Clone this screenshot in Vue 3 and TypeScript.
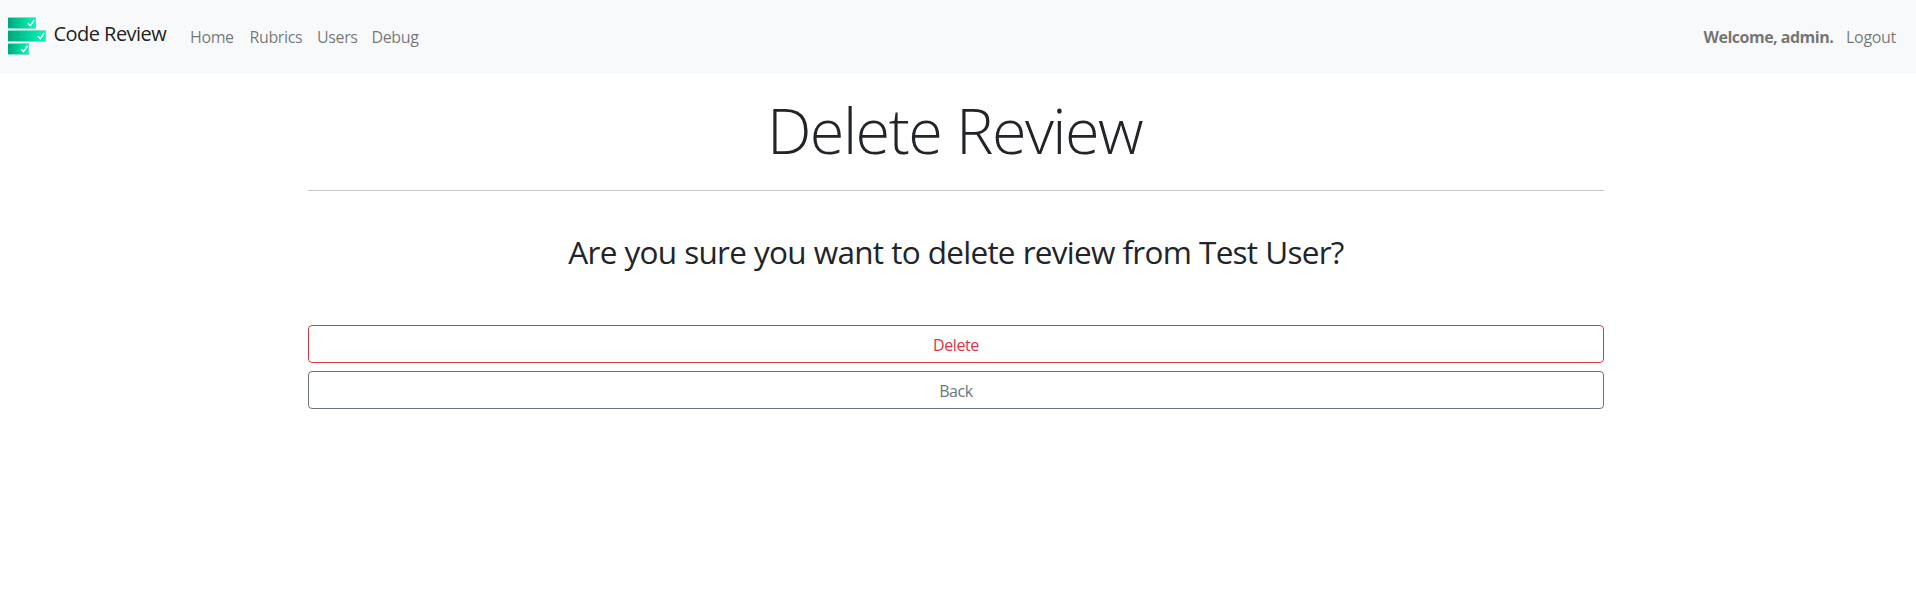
<script setup lang="ts">
const links: { label: string; key: string }[] = [
  { label: 'Home', key: 'home' },
  { label: 'Rubrics', key: 'rubrics' },
  { label: 'Users', key: 'users' },
  { label: 'Debug', key: 'debug' },
]
</script>

<template>
  <div class="page">
    <nav class="navbar">
      <a class="brand">
        <svg class="logo" width="38" height="38" viewBox="0 0 38 38">
          <defs>
            <linearGradient id="bar" x1="0" x2="1" y1="0" y2="0">
              <stop offset="0" stop-color="#00a67c" />
              <stop offset="1" stop-color="#00fab8" />
            </linearGradient>
          </defs>
          <rect x="0" y="0" width="28" height="12" fill="#82dfc5" />
          <rect x="0" y="13" width="38" height="12" fill="#82dfc5" />
          <rect x="0" y="26" width="21" height="12" fill="#82dfc5" />
          <rect x="0" y="1" width="27.5" height="10" fill="url(#bar)" />
          <rect x="0" y="14" width="37.5" height="10" fill="url(#bar)" />
          <rect x="0" y="27" width="20.5" height="10" fill="url(#bar)" />
          <g fill="none" stroke="#fff" stroke-width="1.5">
            <path d="M19.8 6.2 L22.3 8.6 L26.2 3" />
            <path d="M29.8 19.2 L32.3 21.6 L36.2 16" />
            <path d="M13 32.2 L15.5 34.6 L19.4 29" />
          </g>
        </svg>
        <span class="brand-name">Code Review</span>
      </a>
      <div class="links">
        <a v-for="link in links" :key="link.key" class="link" :class="link.key">{{ link.label }}</a>
      </div>
      <div class="account">
        <strong class="welcome">Welcome, admin.</strong>
        <a class="logout">Logout</a>
      </div>
    </nav>
    <main class="container">
      <h1 class="title">Delete Review</h1>
      <hr class="rule" />
      <h2 class="question">Are you sure you want to delete review from Test User?</h2>
      <div class="actions">
        <button class="btn danger" type="button">Delete</button>
        <button class="btn secondary" type="button">Back</button>
      </div>
    </main>
  </div>
</template>

<style>
body {
  background: #fff;
}
</style>

<style scoped>
.page {
  font-family: "Open Sans", "Noto Sans", sans-serif;
  font-size: 16px;
  line-height: 24px;
  color: #212529;
}
.navbar {
  box-sizing: border-box;
  height: 73px;
  padding: 0 20px 0 8px;
  display: flex;
  align-items: flex-start;
  background: #f8f9fa;
  white-space: nowrap;
}
.brand {
  display: flex;
  width: 182px;
  padding-top: 17px;
  color: rgba(0, 0, 0, 0.9);
}
.logo {
  flex: none;
}
.brand-name {
  margin: 2px 0 0 7.5px;
  font-size: 20px;
  line-height: 30px;
  letter-spacing: -0.54px;
}
.links,
.account {
  display: flex;
  padding-top: 25px;
  color: rgba(0, 0, 0, 0.55);
}
.link {
  letter-spacing: -0.38px;
}
.home {
  width: 59.5px;
}
.rubrics {
  width: 67.5px;
}
.users {
  width: 54.5px;
}
.account {
  margin-left: auto;
}
.welcome {
  width: 142.5px;
  letter-spacing: -0.5px;
}
.logout {
  width: 50px;
  letter-spacing: -0.3px;
}
.container {
  width: 1296px;
  margin-left: 308px;
  text-align: center;
}
.title {
  margin: 0;
  padding: 18px 3px 0 0;
  font-size: 63px;
  font-weight: 300;
  line-height: 77px;
  letter-spacing: -1.55px;
  white-space: nowrap;
}
.rule {
  height: 1px;
  margin: 22px 0 0;
  border: 0;
  background: #c8c9ca;
}
.question {
  margin: 42px 0 0;
  font-size: 31.5px;
  font-weight: 400;
  line-height: 38px;
  letter-spacing: -0.75px;
  word-spacing: 0.5px;
  white-space: nowrap;
}
.actions {
  display: grid;
  gap: 8px;
  margin-top: 54px;
}
.btn {
  box-sizing: border-box;
  height: 38px;
  padding: 2px 0 0;
  border: 1px solid;
  border-radius: 4px;
  background: #fff;
  font: inherit;
  letter-spacing: -0.4px;
}
.danger {
  color: #dc3545;
}
.secondary {
  color: #6c757d;
}
</style>
